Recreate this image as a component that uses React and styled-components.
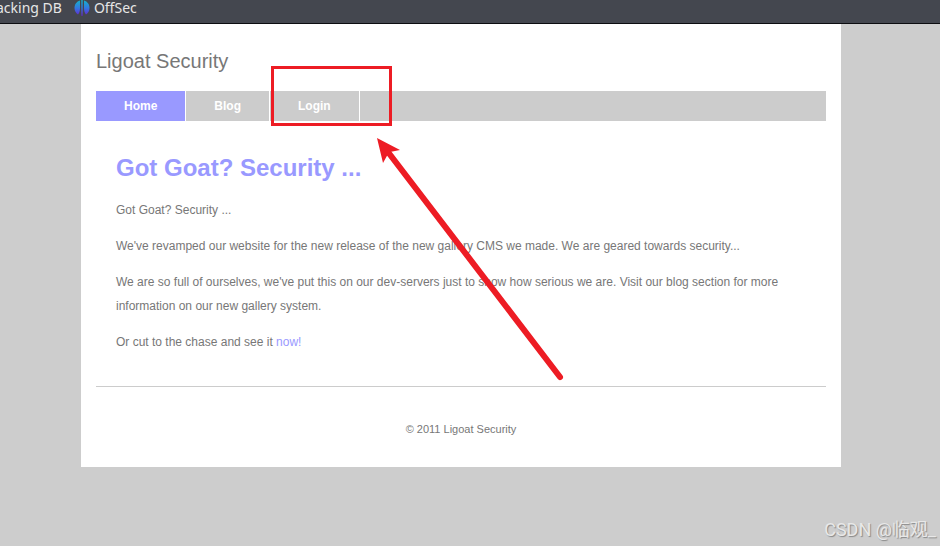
import React from "react";
import styled, { createGlobalStyle } from "styled-components";

const GlobalStyle = createGlobalStyle`
  body {
    margin: 0;
    background-color: #cdcdcd;
    color: #777;
    font-family: "Liberation Sans", Arial, sans-serif;
    font-size: 12px;
    line-height: 24px;
  }
`;

const Screen = styled.div`
  position: relative;
  display: flex;
  flex-direction: column;
  min-height: 100vh;
`;

const BookmarkBar = styled.nav`
  padding-bottom: 7px;
  background-color: #44474f;
  border-bottom: 1px solid #0c0d10;
`;

// the list is scrolled a little past the left edge of the bar
const BookmarkList = styled.div`
  display: flex;
  gap: 12px;
  margin-left: -4px;
`;

const Bookmark = styled.a`
  display: flex;
  align-items: center;
  gap: 4px;
  color: #e6e6e6;
  font-family: "Noto Sans", "Open Sans", sans-serif;
  font-size: 14px;
  line-height: 16px;
  text-decoration: none;
  white-space: nowrap;
`;

const PageArea = styled.div`
  display: flex;
  justify-content: center;
  padding-right: 18px;
`;

const Sheet = styled.div`
  position: relative;
  width: 100%;
  max-width: 760px;
  padding: 0 15px;
  box-sizing: border-box;
  background-color: #fff;
`;

const SiteTitle = styled.header`
  padding: 25px 0 18px;
  font-size: 20px;
`;

const Menu = styled.nav`
  display: flex;
  height: 30px;
  background-color: #ccc;
`;

const MenuLink = styled.a`
  padding: 0 28px;
  border-right: 1px solid #fff;
  background-color: ${(props) => (props.$active ? "#9999ff" : "#ccc")};
  color: #fff;
  font-weight: bold;
  line-height: 30px;
  text-decoration: none;
`;

const Content = styled.main`
  padding: 32px 20px;
  border-bottom: 1px solid #ccc;
`;

const Heading = styled.h1`
  margin: 0 0 15px;
  color: #9999ff;
  font-size: 24px;
  line-height: 30px;
`;

const Paragraph = styled.p`
  margin: 0 0 12px;

  &:last-child {
    margin-bottom: 0;
  }
`;

const TextLink = styled.a`
  color: #9999ff;
  text-decoration: none;
`;

const Footer = styled.footer`
  padding: 30px 0 26px;
  font-size: 11px;
  text-align: center;
`;

const Highlight = styled.div`
  position: absolute;
  top: 42px;
  left: 190px;
  width: 121px;
  height: 60px;
  box-sizing: border-box;
  border: 3px solid #ed1c24;
  pointer-events: none;
`;

const Arrow = styled.svg`
  position: absolute;
  top: 110px;
  left: 290px;
  pointer-events: none;
`;

const Watermark = styled.div`
  position: absolute;
  right: 4px;
  bottom: 4px;
  color: #e8e8e8;
  font-family: Roboto, "Noto Sans CJK SC", sans-serif;
  font-size: 18px;
  text-shadow: 1px 1px 1px #888;
`;

const menuItems = ["Home", "Blog", "Login"];

function OffSecIcon() {
  return (
    <svg width="16" height="16" viewBox="0 0 16 16" aria-hidden="true">
      <defs>
        <linearGradient id="offsec" gradientUnits="userSpaceOnUse" x1="0" y1="0" x2="0" y2="16">
          <stop offset="0" stopColor="#14b4c8" />
          <stop offset="0.5" stopColor="#3278e0" />
          <stop offset="1" stopColor="#6a20d0" />
        </linearGradient>
      </defs>
      <g fill="url(#offsec)">
        <path d="M6 0.5C2.5 1.5 0.5 4.5 0.5 8c0 2.8 1.3 5 3.5 6.5C5.4 13 6 11 6 8Z" />
        <path d="M7.3 0h1.4v13L8.5 16h-1L7.3 13Z" />
        <path d="M10 0.5c3.500 1 5.500 4 5.500 7.500 0 2.800-1.300 5-3.500 6.500C10.600 13 10 11 10 8Z" />
      </g>
    </svg>
  );
}

function App() {
  return (
    <Screen>
      <GlobalStyle />
      <BookmarkBar>
        <BookmarkList>
          <Bookmark href="#">acking DB</Bookmark>
          <Bookmark href="#">
            <OffSecIcon />
            OffSec
          </Bookmark>
        </BookmarkList>
      </BookmarkBar>
      <PageArea>
        <Sheet>
          <SiteTitle>Ligoat Security</SiteTitle>
          <Menu>
            {menuItems.map((item) => (
              <MenuLink key={item} href="#" $active={item === "Home"}>
                {item}
              </MenuLink>
            ))}
          </Menu>
          <Content>
            <Heading>Got Goat? Security ...</Heading>
            <Paragraph>Got Goat? Security ...</Paragraph>
            <Paragraph>
              We've revamped our website for the new release of the new gallery
              CMS we made. We are geared towards security...
            </Paragraph>
            <Paragraph>
              We are so full of ourselves, we've put this on our dev-servers
              just to show how serious we are. Visit our blog section for more
              information on our new gallery system.
            </Paragraph>
            <Paragraph>
              Or cut to the chase and see it <TextLink href="#">now!</TextLink>
            </Paragraph>
          </Content>
          <Footer>© 2011 Ligoat Security</Footer>
          <Highlight />
          <Arrow width="200" height="260" viewBox="0 0 200 260" aria-hidden="true">
            <path
              d="M17 18L189 243"
              stroke="#ed1c24"
              strokeWidth="6"
              strokeLinecap="round"
            />
            <path d="M6 4L29 16L19 18L17 20L12 29Z" fill="#ed1c24" />
          </Arrow>
        </Sheet>
      </PageArea>
      <Watermark>CSDN @临观_</Watermark>
    </Screen>
  );
}

export default App;
